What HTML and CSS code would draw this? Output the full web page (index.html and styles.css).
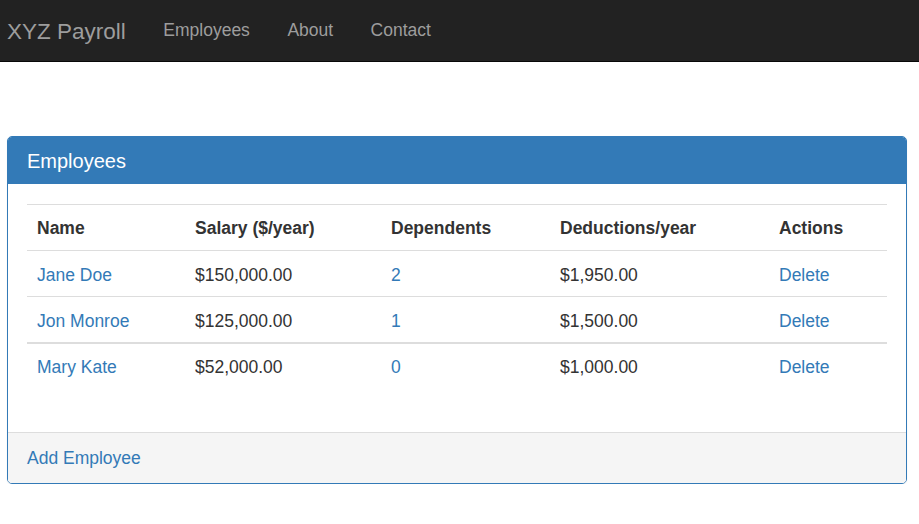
FILE: index.html
```html
<!DOCTYPE html>
<html lang="en">
<head>
<meta charset="utf-8">
<title>XYZ Payroll</title>
<link rel="stylesheet" href="styles.css">
</head>
<body>
<nav class="navbar">
  <a class="brand" href="#">XYZ Payroll</a>
  <ul class="nav">
    <li><a href="#">Employees</a></li>
    <li><a href="#">About</a></li>
    <li><a href="#">Contact</a></li>
  </ul>
</nav>
<main class="content">
  <section class="panel">
    <div class="panel-heading">Employees</div>
    <div class="panel-body">
      <table class="table">
        <colgroup>
          <col class="c1"><col class="c2"><col class="c3"><col class="c4"><col class="c5">
        </colgroup>
        <thead>
          <tr><th>Name</th><th>Salary ($/year)</th><th>Dependents</th><th>Deductions/year</th><th>Actions</th></tr>
        </thead>
        <tbody>
          <tr><td><a href="#">Jane Doe</a></td><td>$150,000.00</td><td><a href="#">2</a></td><td>$1,950.00</td><td><a href="#">Delete</a></td></tr>
          <tr><td><a href="#">Jon Monroe</a></td><td>$125,000.00</td><td><a href="#">1</a></td><td>$1,500.00</td><td><a href="#">Delete</a></td></tr>
          <tr class="thick"><td><a href="#">Mary Kate</a></td><td>$52,000.00</td><td><a href="#">0</a></td><td>$1,000.00</td><td><a href="#">Delete</a></td></tr>
        </tbody>
      </table>
    </div>
    <div class="panel-footer"><a href="#">Add Employee</a></div>
  </section>
</main>
</body>
</html>
```

FILE: styles.css
```css
* { box-sizing: border-box; }
html, body { margin: 0; padding: 0; }
body {
  font-family: "Liberation Sans", Arial, sans-serif;
  font-size: 17.5px;
  line-height: 25px;
  color: #333;
  background: #fff;
}
a { color: #337ab7; text-decoration: none; }

.navbar {
  display: flex;
  align-items: stretch;
  height: 62px;
  background: #222;
  border-bottom: 1px solid #080808;
}
.brand {
  display: block;
  padding: 1px 18.75px 0 7px;
  font-size: 22.5px;
  line-height: 61px;
  color: #9d9d9d;
}
.nav {
  display: flex;
  list-style: none;
  margin: 0;
  padding: 0;
}
.nav a {
  display: block;
  padding: 18px 18.75px 0;
  line-height: 25px;
  font-size: 17.5px;
  color: #9d9d9d;
}

.content {
  padding: 74px 12px 0 7px;
}
.panel {
  border: 1px solid #337ab7;
  border-radius: 5px;
  background: #fff;
  box-shadow: 0 1px 2px rgba(0,0,0,.05);
  overflow: hidden;
}
.panel-heading {
  background: #337ab7;
  color: #fff;
  font-size: 20px;
  line-height: 22px;
  padding: 13px 19px 12px 19px;
}
.panel-body {
  padding: 20px 19px 19px 19px;
}
.table {
  width: 100%;
  border-collapse: collapse;
  margin-bottom: 25px;
}
.c1 { width: 158px; }
.c2 { width: 196px; }
.c3 { width: 169px; }
.c4 { width: 219px; }
.c5 { width: 118px; }
.table th, .table td {
  text-align: left;
  padding: 12px 10px 8px;
  line-height: 25px;
  border-top: 1px solid #ddd;
  vertical-align: top;
}
.table th { font-weight: bold; padding: 11px 10px 9px; }
.table tr.thick td {
  border-top: 2px solid #ddd;
  padding-top: 11px;
}
.panel-footer {
  background: #f5f5f5;
  border-top: 1px solid #ddd;
  padding: 13px 19px 12px;
  line-height: 25px;
}
```
